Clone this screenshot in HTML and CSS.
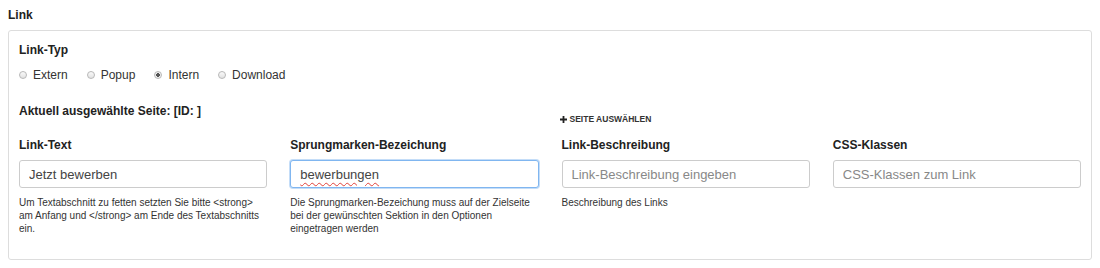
FILE: index.html
```html
<!DOCTYPE html>
<html lang="de">
<head>
<meta charset="UTF-8" />
<title>Link</title>
<link rel="stylesheet" href="styles.css">
</head>
<body>

<h2 class="section-title">Link</h2>

<div class="panel">
  <div class="field-label">Link-Typ</div>
  <div class="radio-row">
    <label class="radio"><input type="radio" name="linktyp" /> Extern</label>
    <label class="radio"><input type="radio" name="linktyp" /> Popup</label>
    <label class="radio"><input type="radio" name="linktyp" checked /> Intern</label>
    <label class="radio"><input type="radio" name="linktyp" /> Download</label>
  </div>

  <div class="grid page-row">
    <div class="current-page">Aktuell ausgewählte Seite: [ID: ]</div>
    <button type="button" class="btn-link">
      <svg width="7" height="7" viewBox="0 0 7 7" aria-hidden="true"><path d="M3.5 0v7M0 3.5h7" stroke="#222" stroke-width="1.8"/></svg>
      Seite auswählen
    </button>
  </div>

  <div class="grid fields">
    <div class="field">
      <label class="field-label" for="linktext">Link-Text</label>
      <input type="text" id="linktext" class="input" value="Jetzt bewerben" />
      <p class="help">Um Textabschnitt zu fetten setzten Sie bitte &lt;strong&gt; am Anfang und &lt;/strong&gt; am Ende des Textabschnitts ein.</p>
    </div>
    <div class="field">
      <label class="field-label" for="anchor">Sprungmarken-Bezeichung</label>
      <div class="input-wrap">
        <input type="text" id="anchor" class="input focused" value="bewerbungen" />
        <!-- spellcheck squiggle -->
        <span class="spell" aria-hidden="true">bewerbungen</span>
      </div>
      <p class="help">Die Sprungmarken-Bezeichung muss auf der Zielseite bei der gewünschten Sektion in den Optionen eingetragen werden</p>
    </div>
    <div class="field">
      <label class="field-label" for="desc">Link-Beschreibung</label>
      <input type="text" id="desc" class="input" placeholder="Link-Beschreibung eingeben" />
      <p class="help">Beschreibung des Links</p>
    </div>
    <div class="field">
      <label class="field-label" for="css">CSS-Klassen</label>
      <input type="text" id="css" class="input" placeholder="CSS-Klassen zum Link" />
    </div>
  </div>
</div>

</body>
</html>
```

FILE: styles.css
```css
* {
  box-sizing: border-box;
}

body {
  margin: 8px;
  font-family: "Liberation Sans", Arial, sans-serif;
  color: #222;
  background: #fff;
}

.section-title {
  margin: 0 0 8px;
  font-size: 12px;
  line-height: 14px;
  font-weight: 700;
}

.panel {
  border: 1px solid #ddd;
  border-radius: 3px;
  padding: 11px 10px 24px;
}

.field-label {
  display: block;
  font-size: 12px;
  line-height: 16px;
  font-weight: 700;
  color: #222;
}

/* Radios */
.radio-row {
  display: flex;
  margin-top: 9px;
  font-size: 12px;
  line-height: 16px;
}

.radio {
  display: flex;
  align-items: center;
  margin-right: 19px;
  color: #333;
}

.radio input {
  appearance: none;
  width: 8px;
  height: 8px;
  margin: 0 6px 0 0;
  border: 1px solid #b8b8b8;
  border-radius: 50%;
  background: linear-gradient(#fafafa, #e2e2e2);
}

.radio input:checked {
  background: radial-gradient(circle, #555 0 1.6px, #eee 2.1px);
}

.grid {
  display: grid;
  grid-template-columns: repeat(4, 1fr);
  column-gap: 23px;
}

.page-row {
  margin-top: 20px;
  align-items: start;
}

.current-page {
  grid-column: span 2;
  font-size: 12px;
  line-height: 16px;
  font-weight: 700;
}

.btn-link {
  display: flex;
  align-items: center;
  gap: 3px;
  margin: 11px 0 0 -2px;
  padding: 0;
  border: none;
  background: none;
  font-family: inherit;
  font-size: 8.5px;
  line-height: 10px;
  font-weight: 700;
  text-transform: uppercase;
  color: #333;
  cursor: pointer;
  justify-self: start;
}

.fields {
  margin-top: 13px;
}

.input {
  display: block;
  width: 100%;
  height: 28px;
  margin-top: 7px;
  padding: 0 9px;
  border: 1px solid #ccc;
  border-radius: 3px;
  font-family: inherit;
  font-size: 13px;
  color: #444;
  background: #fff;
}

.input::placeholder {
  color: #888;
}

.input.focused {
  border-color: #80b6f0;
  box-shadow: 0 0 0 1px #c4ddf8;
  outline: none;
}

.input-wrap {
  position: relative;
}

.spell {
  position: absolute;
  left: 10px;
  top: 9px;
  font-size: 13px;
  line-height: 16px;
  color: transparent;
  text-decoration: underline wavy #e0413b;
  text-decoration-thickness: 1px;
  text-underline-offset: 1px;
  pointer-events: none;
}

.help {
  margin: 8px 0 0;
  font-size: 10px;
  line-height: 13px;
  color: #333;
}
```
